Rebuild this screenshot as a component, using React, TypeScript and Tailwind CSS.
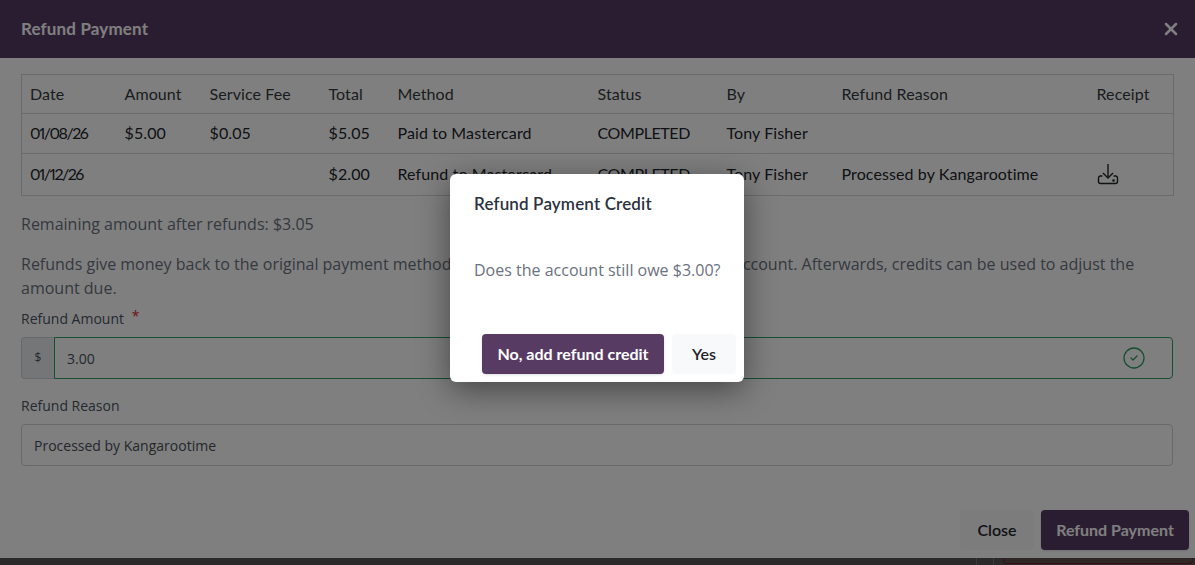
import React from 'react';
import { X, CircleCheck } from 'lucide-react';

const heading = "font-['Lato','Liberation_Sans',sans-serif]";
const body = "font-['Open_Sans','Liberation_Sans',sans-serif]";

const columns = [95, 85, 119, 69, 200, 129, 115, 255, 85];
const headers = ['Date', 'Amount', 'Service Fee', 'Total', 'Method', 'Status', 'By', 'Refund Reason', 'Receipt'];

const DownloadIcon: React.FC = () => (
  <svg width="22" height="22" viewBox="0 0 22 22" fill="none" stroke="currentColor" strokeWidth="1.4" className="block">
    <path d="M11 1v14" />
    <path d="M6 10l5 5 5-5" />
    <path d="M5.5 13H3a2 2 0 0 0-1.5 2v3.5a2 2 0 0 0 2 2h15a2 2 0 0 0 2-2V15A2 2 0 0 0 19 13h-2.5" />
    <circle cx="16.5" cy="17.5" r="0.6" />
  </svg>
);

const Cell: React.FC<{ children?: React.ReactNode }> = ({ children }) => (
  <td className="px-2 pb-0.5 align-middle text-base tracking-[0.1px] text-[#212529] whitespace-nowrap">{children}</td>
);

const DateCell: React.FC<{ children?: React.ReactNode }> = ({ children }) => (
  <td className="px-2 pb-0.5 align-middle text-base tracking-[-1.5px] proportional-nums text-[#212529] whitespace-nowrap">{children}</td>
);

const StatusCell: React.FC = () => (
  <td className="px-2 pb-0.5 align-middle text-base tracking-[-0.4px] text-[#212529] whitespace-nowrap">COMPLETED</td>
);

const PaymentTable: React.FC = () => (
  <table className={`w-[1152px] table-fixed border-collapse border border-[#d3d6de] ${heading}`}>
    <colgroup>
      {columns.map((w, i) => (
        <col key={i} style={{ width: w }} />
      ))}
    </colgroup>
    <thead>
      <tr className="h-[39px] border-b border-[#d3d6de]">
        {headers.map((h) => (
          <th key={h} className="px-2 text-left font-normal text-base tracking-[0.1px] text-[#343a40]">
            {h}
          </th>
        ))}
      </tr>
    </thead>
    <tbody>
      <tr className="h-[40px] border-b border-[#d3d6de]">
        <DateCell>01/08/26</DateCell>
        <Cell>$5.00</Cell>
        <Cell>$0.05</Cell>
        <Cell>$5.05</Cell>
        <Cell>Paid to Mastercard</Cell>
        <StatusCell />
        <Cell>Tony Fisher</Cell>
        <Cell />
        <Cell />
      </tr>
      <tr className="h-[42px]">
        <DateCell>01/12/26</DateCell>
        <Cell />
        <Cell />
        <Cell>$2.00</Cell>
        <Cell>Refund to Mastercard</Cell>
        <StatusCell />
        <Cell>Tony Fisher</Cell>
        <Cell>Processed by Kangarootime</Cell>
        <Cell>
          <DownloadIcon />
        </Cell>
      </tr>
    </tbody>
  </table>
);

const RefundForm: React.FC = () => (
  <div className={`${body} text-[#6b7280]`}>
    <p className="mt-4 text-base leading-6">Remaining amount after refunds: $3.05</p>
    <p className="mt-4 text-base leading-6">
      Refunds give money back to the original payment method, while credits give money back to the account. Afterwards, credits can be used to adjust the amount due.
    </p>
    <label className="mt-2 block h-[21px] text-sm leading-[21px] text-[#4b5563]">
      Refund Amount <span className="relative -top-[3px] ml-1 text-[#dc2626]">*</span>
    </label>
    <div className="mt-[8px] flex h-[42px]">
      <span className="flex w-[33px] items-center justify-center rounded-l-[4px] border border-r-0 border-[#ced4da] bg-[#e9ecef] text-xs text-[#495057]">
        $
      </span>
      <div className="flex flex-1 items-center justify-between rounded-r-[4px] border border-[#2e9e63] bg-white pl-3 pr-[26px] text-sm text-[#495057]">
        <span className="pt-px">3.00</span>
        <CircleCheck className="h-6 w-6 text-[#2e9e63]" strokeWidth={1.3} />
      </div>
    </div>
    <label className="mt-4 block h-[21px] text-sm leading-[21px] text-[#4b5563]">Refund Reason</label>
    <div className="mt-[8px] flex h-[42px] items-center rounded-[4px] border border-[#ced4da] bg-white px-3 pt-px text-sm text-[#495057]">
      Processed by Kangarootime
    </div>
  </div>
);

const RefundModal: React.FC = () => (
  <div className="flex h-[558px] flex-col bg-white">
    <header className={`flex h-[58px] shrink-0 items-center justify-between bg-[#573b63] pl-[21px] pr-[14px] ${heading}`}>
      <h1 className="text-[17px] tracking-[0.15px] font-bold text-white">Refund Payment</h1>
      <X className="h-[20px] w-[20px] text-white" strokeWidth={3} />
    </header>
    <div className="flex-1 px-[21px] pt-4 pr-[22px]">
      <PaymentTable />
      <RefundForm />
    </div>
    <footer className={`flex h-[48px] shrink-0 items-start justify-end gap-[7px] pr-[6px] ${heading} text-base font-bold`}>
      <button className="h-10 w-[74px] rounded bg-[#f8f9fa] font-semibold text-[#212529]">Close</button>
      <button className="h-10 w-[148px] rounded bg-[#573b63] text-white shadow-sm">Refund Payment</button>
    </footer>
  </div>
);

const ConfirmDialog: React.FC = () => (
  <div className="mr-px h-[208px] w-[294px] rounded-md bg-white shadow-[0_8px_32px_rgba(0,0,0,0.45)]">
    <h2 className={`px-6 pt-[19px] text-[17px] tracking-[0.15px] leading-[22px] font-semibold text-[#2b3240] ${heading}`}>
      Refund Payment Credit
    </h2>
    <p className={`mt-[43px] px-6 text-base leading-6 text-[#6b7280] whitespace-nowrap ${body}`}>
      Does the account still owe $3.00?
    </p>
    <div className={`mt-[52px] flex justify-end gap-2 pr-2 text-base font-bold ${heading}`}>
      <button className="h-10 w-[182px] rounded bg-[#573b63] text-white shadow-sm">No, add refund credit</button>
      <button className="h-10 w-[64px] rounded bg-[#f8f9fa] font-semibold text-[#212529]">Yes</button>
    </div>
  </div>
);

export default function App() {
  return (
    <div className="relative h-[565px] w-[1195px] overflow-hidden bg-[#545454]">
      <RefundModal />
      {/* what peeks out under the modal */}
      <div className="flex h-[7px] justify-end pr-0.5">
        <div className="mr-4 w-px bg-[#777777]" />
        <div className="mr-[9px] w-px bg-[#777777]" />
        <div className="h-[6px] w-[190px] rounded-b border-x border-b border-[#7a1f2a] bg-[#5f4c4c]" />
      </div>
      <div className="absolute inset-0 flex justify-center bg-black/50 pt-[174px]">
        <ConfirmDialog />
      </div>
    </div>
  );
}
